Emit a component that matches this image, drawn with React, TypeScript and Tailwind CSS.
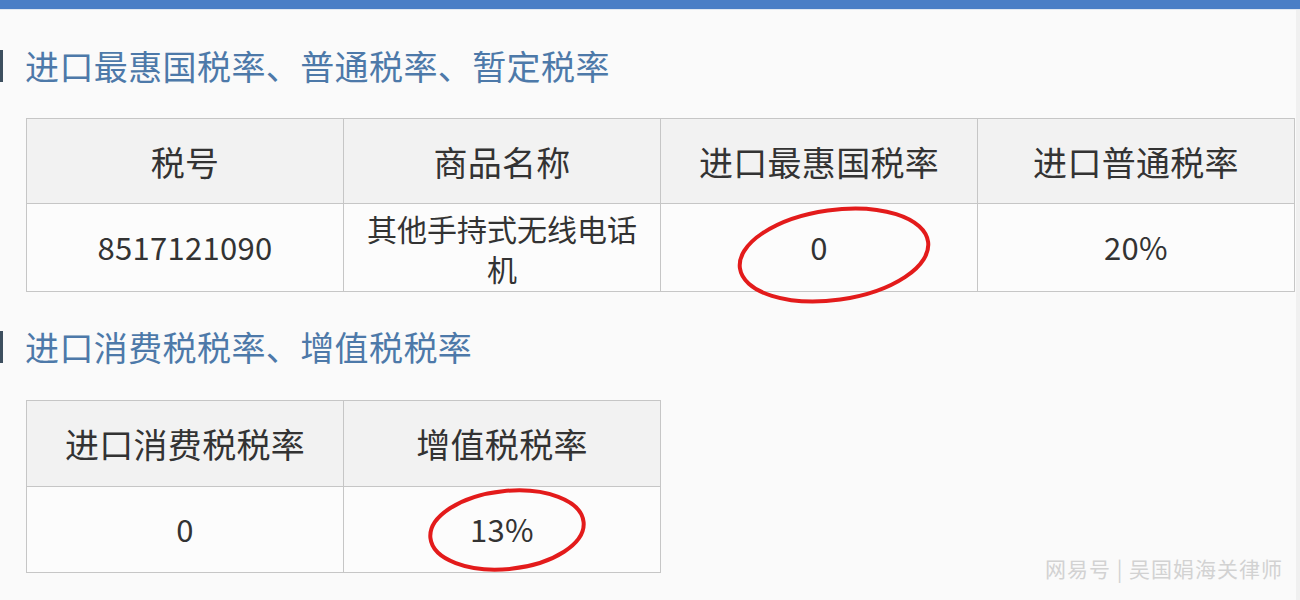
import React from "react";

const font = { fontFamily: '"Noto Sans CJK SC", "Noto Sans", sans-serif' };

function Heading({ text }: { text: string }) {
  return (
    <div className="relative flex h-[34px] items-center pl-[25px]">
      <div className="absolute left-0 top-[1px] h-[32px] w-[3px] bg-[#3d4f5f]" />
      <span className="text-[34px] leading-[34px] tracking-[0.4px] text-[#4d79a9]">{text}</span>
    </div>
  );
}

function Ellipse({ w, h, rot }: { w: number; h: number; rot: number }) {
  return (
    <svg width={w} height={h} viewBox={`0 0 ${w} ${h}`} className="overflow-visible">
      <ellipse
        cx={w / 2}
        cy={h / 2}
        rx={w / 2 - 3}
        ry={h / 2 - 3}
        fill="none"
        stroke="#e31b1b"
        strokeWidth="4"
        transform={`rotate(${rot} ${w / 2} ${h / 2})`}
      />
    </svg>
  );
}

export default function App() {
  return (
    <div className="relative h-[600px] w-[1300px] overflow-hidden bg-[#fafafa] text-[#333]" style={font}>
      <div className="h-[9px] bg-[#4a7ec6]" />
      <div className="h-px bg-[#dfe7f1]" />
      <div className="absolute right-0 top-[10px] h-[590px] w-[4px] bg-[#f0f0f0]" />
      <div className="flex flex-col">
        <div className="mt-[39px]">
          <Heading text="进口最惠国税率、普通税率、暂定税率" />
        </div>
        <div className="ml-[26px] mt-[35px] grid w-[1269px] grid-cols-[repeat(4,317px)] border-l border-t border-[#c6c6c6] text-[34px] tracking-[0.3px]">
          {["税号", "商品名称", "进口最惠国税率", "进口普通税率"].map((t) => (
            <div key={t} className="flex h-[85px] items-center justify-center border-b border-r border-[#c6c6c6] bg-[#f2f2f2]">
              {t}
            </div>
          ))}
          <div className="flex h-[88px] items-center justify-center border-b border-r border-[#c6c6c6] bg-[#fcfcfc] text-[31px]">
            8517121090
          </div>
          <div className="flex h-[88px] items-center justify-center border-b border-r border-[#c6c6c6] bg-[#fcfcfc] px-[20px] text-center text-[30px] leading-[40px] tracking-normal">
            其他手持式无线电话机
          </div>
          <div className="relative flex h-[88px] items-center justify-center border-b border-r border-[#c6c6c6] bg-[#fcfcfc] text-[31px]">
            0
            <div className="absolute left-[75px] top-[3px]">
              <Ellipse w={196} h={96} rot={-8} />
            </div>
          </div>
          <div className="flex h-[88px] items-center justify-center border-b border-r border-[#c6c6c6] bg-[#fcfcfc] text-[31px]">
            20%
          </div>
        </div>
        <div className="mt-[38px]">
          <Heading text="进口消费税税率、增值税税率" />
        </div>
        <div className="ml-[26px] mt-[36px] grid w-[635px] grid-cols-[repeat(2,317px)] border-l border-t border-[#c6c6c6] text-[34px] tracking-[0.3px]">
          {["进口消费税税率", "增值税税率"].map((t) => (
            <div key={t} className="flex h-[86px] items-center justify-center border-b border-r border-[#c6c6c6] bg-[#f2f2f2]">
              {t}
            </div>
          ))}
          <div className="flex h-[86px] items-center justify-center border-b border-r border-[#c6c6c6] bg-[#fcfcfc] text-[31px]">
            0
          </div>
          <div className="relative flex h-[86px] items-center justify-center border-b border-r border-[#c6c6c6] bg-[#fcfcfc] text-[31px]">
            13%
            <div className="absolute left-[83px] top-[1px]">
              <Ellipse w={160} h={84} rot={-6} />
            </div>
          </div>
        </div>
      </div>
      <div className="absolute bottom-[16px] right-[17px] text-[21px] tracking-[1px] text-[#d2d2d2]">
        网易号 | 吴国娟海关律师
      </div>
    </div>
  );
}
